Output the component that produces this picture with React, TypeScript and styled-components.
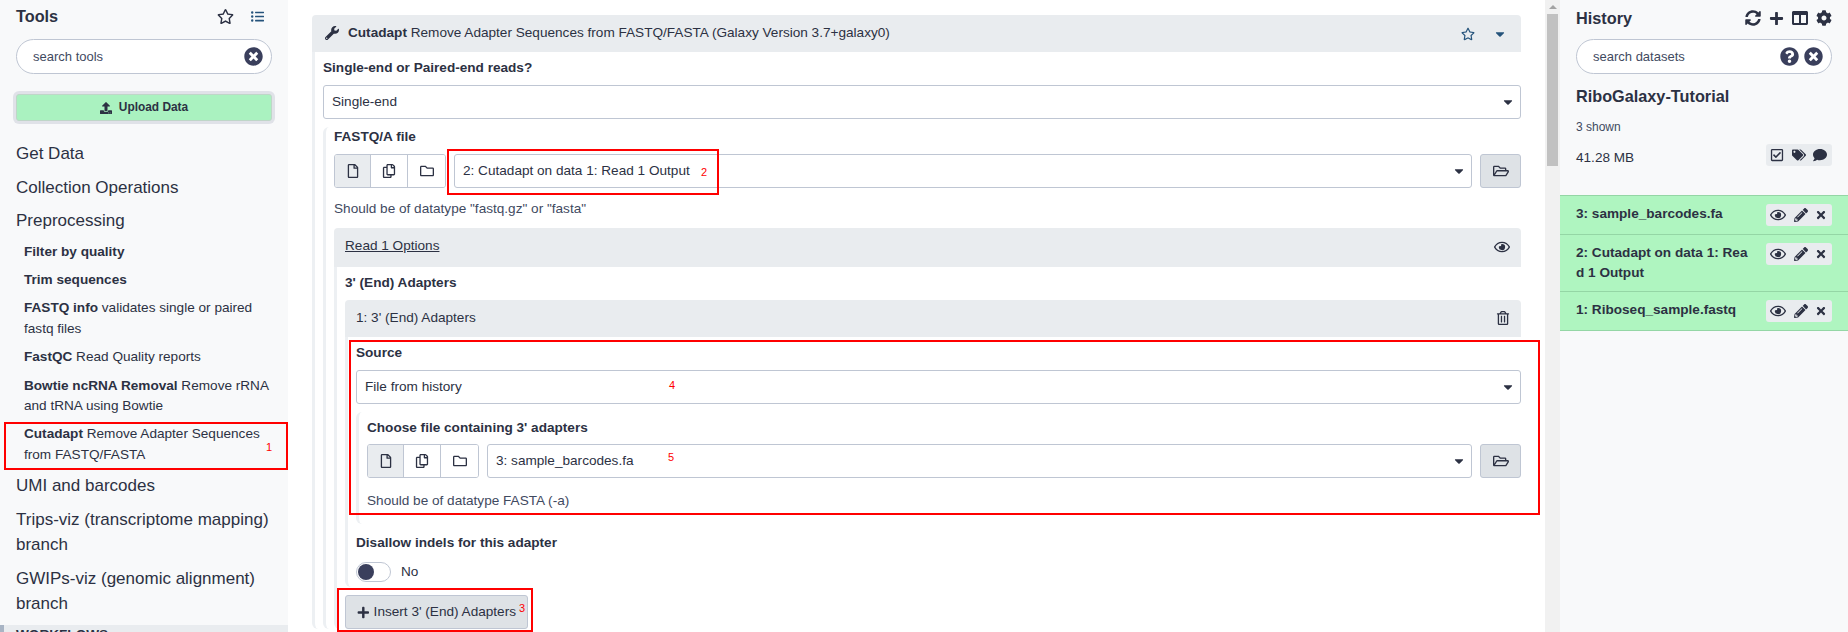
import React from "react";
import styled, { createGlobalStyle } from "styled-components";
import {
  FaRegStar, FaListUl, FaTimesCircle, FaUpload, FaWrench, FaCaretDown, FaRegFile, FaRegCopy, FaRegFolder,
  FaRegFolderOpen, FaRegEye, FaRegTrashAlt, FaPlus, FaSyncAlt, FaColumns, FaCog, FaQuestionCircle,
  FaRegCheckSquare, FaTags, FaComment, FaPencilAlt, FaTimes,
} from "react-icons/fa";

const Global = createGlobalStyle`
  html, body { margin: 0; padding: 0; background: #fff; }
  body { font-family: "Liberation Sans", Arial, sans-serif; font-size: 13.6px; line-height: 1.5; color: #2c3143; }
  * { box-sizing: border-box; }
`;

const Page = styled.div`
  position: relative; display: flex; width: 1848px; height: 632px; overflow: hidden;
`;
const SidePanel = styled.aside`
  flex: 0 0 288px; width: 288px; height: 632px; background: #f8f9fa; display: flex; flex-direction: column; overflow: hidden;
`;
const PanelHead = styled.div<{ $top: number }>`
  display: flex; align-items: center; justify-content: space-between; height: 24px;
  margin: ${(p) => p.$top}px 16px ${(p) => 15 - p.$top}px;
`;
const PanelTitle = styled.div`
  font-size: 16.25px; font-weight: 700; line-height: 24px;
`;
const PanelIcons = styled.div<{ $gap: number }>`
  display: flex; align-items: center; gap: ${(p) => p.$gap}px; color: #2c3143;
  svg { display: block; }
`;
const ListIcon = styled(FaListUl)`
  color: #25537b; margin-right: 8px;
`;
const Search = styled.div`
  display: flex; align-items: center; height: 35px; margin: 0 16px; padding: 0 8px 0 16px; gap: 5px;
  background: #fff; border: 1px solid #bfc6d3; border-radius: 18px; font-size: 13px; color: #3f4a5f;
  svg { color: #3a3f5c; display: block; }
`;
const SearchText = styled.span`
  flex: 1;
`;
const Upload = styled.div`
  display: flex; align-items: center; justify-content: center; gap: 7px; height: 27px; margin: 20px 16px 0; padding-top: 1px;
  background: #aaf2c0; border: 1px solid #bfd6c8; border-radius: 3px; box-shadow: 0 0 0 3px #e0e2e8;
  font-size: 11.9px; font-weight: 700; color: #2c3143;
`;
const ToolList = styled.div`
  display: flex; flex-direction: column; gap: 8px; margin-top: 20px; flex: 1; min-height: 0;
`;
const Category = styled.div`
  font-size: 17px; line-height: 25.5px; padding: 0 16px; color: #2c3143;
`;
const ToolItem = styled.div`
  font-size: 13.6px; line-height: 20.4px; padding: 0 8px 0 24px; color: #2c3143;
  b { font-weight: 700; }
`;
const WorkflowBar = styled.div`
  margin-top: auto; height: 11px; flex: none; background: #e9ecef; border-left: 4px solid #a8b4c4;
  padding-left: 12px; font-size: 13.6px; font-weight: 700; line-height: 20px; overflow: hidden;
`;

const Center = styled.main`
  flex: 1; display: flex; min-width: 0; height: 632px;
`;
const Content = styled.div`
  flex: 1; padding: 15px 24px 0; min-width: 0; overflow: hidden;
`;
const Scrollbar = styled.div`
  flex: 0 0 15px; width: 15px; background: #f1f1f1; padding: 5px 2px 0;
`;
const ScrollArrow = styled.div`
  width: 0; height: 0; margin: 0 auto 5px; border: 4px solid transparent; border-top: 0; border-bottom: 4px solid #a3a3a3;
`;
const ScrollThumb = styled.div`
  width: 11px; height: 152px; background: #c1c1c1;
`;
const CardHeader = styled.div<{ $h: number; $mt?: number }>`
  display: flex; align-items: center; justify-content: space-between; height: ${(p) => p.$h}px;
  margin-top: ${(p) => p.$mt ?? 0}px;
  background: #e9ecef; border-radius: 4px 4px 0 0;
`;
const ToolHeader = styled(CardHeader)`
  padding: 0 14px 0 13px;
`;
const HeaderTitle = styled.div`
  display: flex; align-items: center; gap: 9px; font-size: 13.6px;
  svg { display: block; }
  b { font-weight: 700; }
`;
const HeaderActions = styled.div`
  display: flex; align-items: center; gap: 18px; color: #25537b;
  svg { display: block; }
`;
const Body = styled.div<{ $pb?: number }>`
  border-left: 3px solid #edf0f3; padding: 6px 0 ${(p) => p.$pb ?? 0}px 8px; border-radius: 0 0 0 6px;
`;
const Label = styled.div<{ $mt?: number; $mb?: number }>`
  font-weight: 700; font-size: 13.6px; line-height: 20px; margin-top: ${(p) => p.$mt ?? 0}px; margin-bottom: ${(p) => p.$mb ?? 0}px;
`;
const SelectBox = styled.div`
  flex: 1; min-width: 0; display: flex; align-items: center; justify-content: space-between; height: 34px;
  background: #fff; border: 1px solid #bfc6d3; border-radius: 3px; padding: 0 5px 0 8px; font-size: 13.6px; color: #2c3143;
  svg { display: block; color: #2c3143; }
`;
const Group = styled.div<{ $mt: number; $pt?: number; $pb?: number }>`
  border-left: 3px solid #edf0f3; border-radius: 6px 0 0 6px;
  padding: ${(p) => p.$pt ?? 0}px 0 ${(p) => p.$pb ?? 0}px 8px; margin-top: ${(p) => p.$mt}px;
`;
const DataRow = styled.div`
  display: flex; align-items: stretch; height: 34px;
`;
const BtnGroup = styled.div`
  display: flex; flex: 0 0 112px; margin-right: 8px; border: 1px solid #bfc6d3; border-radius: 3px; overflow: hidden;
`;
const GroupBtn = styled.div<{ $active?: boolean; $w: number }>`
  flex: 0 0 ${(p) => p.$w}px; display: flex; align-items: center; justify-content: center;
  background: ${(p) => (p.$active ? "#e9ecef" : "#fff")};
  & + & { border-left: 1px solid #bfc6d3; }
  svg { display: block; }
`;
const FolderBtn = styled.div`
  flex: 0 0 41px; margin-left: 8px; display: flex; align-items: center; justify-content: center;
  background: #dee2e6; border: 1px solid #bfc6d3; border-radius: 3px;
  svg { display: block; }
`;
const Help = styled.div<{ $mt?: number }>`
  font-size: 13.6px; line-height: 20px; margin-top: ${(p) => p.$mt ?? 11}px; color: #3f4a5f;
`;
const SubHeader = styled(CardHeader)`
  padding: 0 11px 1px;
  svg { display: block; }
`;
const Underlined = styled.span`
  text-decoration: underline; padding-bottom: 2px;
`;
const Switch = styled.div`
  display: flex; align-items: center; gap: 10px; margin-top: 9px;
`;
const Track = styled.div`
  width: 35px; height: 20px; background: #fff; border: 1px solid #bfc6d3; border-radius: 10px; padding: 1px;
`;
const Knob = styled.div`
  width: 16px; height: 16px; border-radius: 50%; background: #3a3f5c;
`;
const InsertBtn = styled.div`
  display: flex; align-items: center; gap: 4px; height: 34px; width: 183px; margin-top: 8px; padding: 0 11px;
  background: #dee2e6; border: 1px solid #bfc6d3; border-radius: 3px; font-size: 13.6px; white-space: nowrap;
  svg { display: block; }
`;

const HistoryName = styled.div`
  margin: 10px 16px 0; font-size: 16.25px; font-weight: 700; line-height: 24px;
`;
const Shown = styled.div`
  margin: 10px 16px 0; font-size: 12px; line-height: 18px; color: #3f4a5f;
`;
const SizeRow = styled.div`
  display: flex; align-items: flex-start; justify-content: space-between; margin: 8px 16px 0; height: 24px;
`;
const SizeText = styled.span`
  font-size: 13.6px; line-height: 20px; padding-top: 4px;
`;
const ActionGroup = styled.div`
  display: flex; align-items: center; justify-content: space-between; width: 66px; height: 22px; padding: 0 5px 0 4px;
  background: #e9ecef; border-radius: 3px; flex: none;
  svg { display: block; }
`;
const Datasets = styled.div`
  margin-top: 27px; border-bottom: 1px solid #94d6a5;
`;
const Dataset = styled.div`
  display: flex; align-items: flex-start; justify-content: space-between; gap: 16px; padding: 8px 16px 8px;
  background: #aff5c0; border-top: 1px solid #94d6a5;
`;
const DatasetName = styled.div`
  flex: 1; min-width: 0; font-weight: 700; font-size: 13.6px; line-height: 20px; word-break: break-all;
`;

const RedBox = styled.div<{ $x: number; $y: number; $w: number; $h: number }>`
  position: absolute; left: ${(p) => p.$x}px; top: ${(p) => p.$y}px; width: ${(p) => p.$w}px; height: ${(p) => p.$h}px;
  border: 2px solid #f00; pointer-events: none;
`;
const RedNum = styled.span<{ $x: number; $y: number }>`
  position: absolute; left: ${(p) => p.$x}px; top: ${(p) => p.$y}px; font-size: 11px; line-height: 12px; color: #f00;
`;

function Select({ text }: { text: string }) {
  return (
    <SelectBox>
      <span>{text}</span>
      <FaCaretDown size={14} />
    </SelectBox>
  );
}

function DataPicker({ text }: { text: string }) {
  return (
    <DataRow>
      <BtnGroup>
        <GroupBtn $active $w={35}><FaRegFile size={14} /></GroupBtn>
        <GroupBtn $w={37}><FaRegCopy size={14} /></GroupBtn>
        <GroupBtn $w={38}><FaRegFolder size={14} /></GroupBtn>
      </BtnGroup>
      <Select text={text} />
      <FolderBtn><FaRegFolderOpen size={16} /></FolderBtn>
    </DataRow>
  );
}

function DatasetActions() {
  return (
    <ActionGroup>
      <FaRegEye size={16} />
      <FaPencilAlt size={14} />
      <FaTimes size={12} />
    </ActionGroup>
  );
}

export default function App() {
  return (
    <Page>
      <Global />
      <SidePanel>
        <PanelHead $top={4}>
          <PanelTitle>Tools</PanelTitle>
          <PanelIcons $gap={17}>
            <FaRegStar size={17} />
            <ListIcon size={13} />
          </PanelIcons>
        </PanelHead>
        <Search>
          <SearchText>search tools</SearchText>
          <FaTimesCircle size={19} />
        </Search>
        <Upload>
          <FaUpload size={12} />
          <span>Upload Data</span>
        </Upload>
        <ToolList>
          <Category>Get Data</Category>
          <Category>Collection Operations</Category>
          <Category>Preprocessing</Category>
          <ToolItem><b>Filter by quality</b></ToolItem>
          <ToolItem><b>Trim sequences</b></ToolItem>
          <ToolItem><b>FASTQ info</b> validates single or paired fastq files</ToolItem>
          <ToolItem><b>FastQC</b> Read Quality reports</ToolItem>
          <ToolItem><b>Bowtie ncRNA Removal</b> Remove rRNA and tRNA using Bowtie</ToolItem>
          <ToolItem><b>Cutadapt</b> Remove Adapter Sequences from FASTQ/FASTA</ToolItem>
          <Category>UMI and barcodes</Category>
          <Category>Trips-viz (transcriptome mapping) branch</Category>
          <Category>GWIPs-viz (genomic alignment) branch</Category>
          <WorkflowBar>WORKFLOWS</WorkflowBar>
        </ToolList>
      </SidePanel>

      <Center>
        <Content>
          <ToolHeader $h={37}>
            <HeaderTitle>
              <FaWrench size={14} />
              <span><b>Cutadapt</b> Remove Adapter Sequences from FASTQ/FASTA (Galaxy Version 3.7+galaxy0)</span>
            </HeaderTitle>
            <HeaderActions>
              <FaRegStar size={14} />
              <FaCaretDown size={14} />
            </HeaderActions>
          </ToolHeader>
          <Body>
            <Label $mb={7}>Single-end or Paired-end reads?</Label>
            <Select text="Single-end" />
            <Group $mt={8}>
              <Label $mb={7}>FASTQ/A file</Label>
              <DataPicker text="2: Cutadapt on data 1: Read 1 Output" />
              <Help>Should be of datatype "fastq.gz" or "fasta"</Help>
              <SubHeader $h={39} $mt={9}>
                <Underlined>Read 1 Options</Underlined>
                <FaRegEye size={16} />
              </SubHeader>
              <Body>
                <Label $mb={7}>3' (End) Adapters</Label>
                <SubHeader $h={37}>
                  <span>1: 3' (End) Adapters</span>
                  <FaRegTrashAlt size={14} />
                </SubHeader>
                <Body $pb={5}>
                  <Label $mb={7}>Source</Label>
                  <Select text="File from history" />
                  <Group $mt={8} $pt={6} $pb={13}>
                    <Label $mb={6}>Choose file containing 3' adapters</Label>
                    <DataPicker text="3: sample_barcodes.fa" />
                    <Help $mt={13}>Should be of datatype FASTA (-a)</Help>
                  </Group>
                  <Label $mt={9}>Disallow indels for this adapter</Label>
                  <Switch>
                    <Track><Knob /></Track>
                    <span>No</span>
                  </Switch>
                </Body>
                <InsertBtn>
                  <FaPlus size={13} />
                  <span>Insert 3' (End) Adapters</span>
                </InsertBtn>
              </Body>
            </Group>
          </Body>
        </Content>
        <Scrollbar>
          <ScrollArrow />
          <ScrollThumb />
        </Scrollbar>
      </Center>

      <SidePanel>
        <PanelHead $top={6}>
          <PanelTitle>History</PanelTitle>
          <PanelIcons $gap={8}>
            <FaSyncAlt size={16} />
            <FaPlus size={15} />
            <FaColumns size={16} />
            <FaCog size={16} />
          </PanelIcons>
        </PanelHead>
        <Search>
          <SearchText>search datasets</SearchText>
          <FaQuestionCircle size={19} />
          <FaTimesCircle size={19} />
        </Search>
        <HistoryName>RiboGalaxy-Tutorial</HistoryName>
        <Shown>3 shown</Shown>
        <SizeRow>
          <SizeText>41.28 MB</SizeText>
          <ActionGroup>
            <FaRegCheckSquare size={14} />
            <FaTags size={14} />
            <FaComment size={14} />
          </ActionGroup>
        </SizeRow>
        <Datasets>
          <Dataset>
            <DatasetName>3: sample_barcodes.fa</DatasetName>
            <DatasetActions />
          </Dataset>
          <Dataset>
            <DatasetName>2: Cutadapt on data 1: Read 1 Output</DatasetName>
            <DatasetActions />
          </Dataset>
          <Dataset>
            <DatasetName>1: Riboseq_sample.fastq</DatasetName>
            <DatasetActions />
          </Dataset>
        </Datasets>
      </SidePanel>

      <RedBox $x={4} $y={422} $w={284} $h={48} />
      <RedBox $x={447} $y={149} $w={272} $h={46} />
      <RedBox $x={337} $y={588} $w={196} $h={44} />
      <RedBox $x={349} $y={340} $w={1191} $h={175} />
      <RedNum $x={266} $y={441}>1</RedNum>
      <RedNum $x={701} $y={166}>2</RedNum>
      <RedNum $x={519} $y={602}>3</RedNum>
      <RedNum $x={669} $y={379}>4</RedNum>
      <RedNum $x={668} $y={451}>5</RedNum>
    </Page>
  );
}
